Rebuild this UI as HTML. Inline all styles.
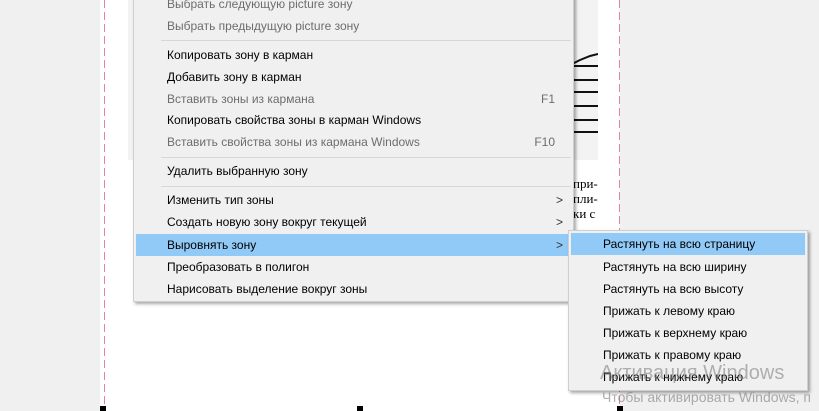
<!DOCTYPE html>
<html><head><meta charset="utf-8"><style>
body{margin:0;width:819px;height:411px;overflow:hidden;background:#f0f0f0;position:relative;font-family:"Segoe UI","Liberation Sans",sans-serif;font-size:12px;}
.page{position:absolute;left:100px;top:0;width:520px;height:411px;background:#fff;}
.dash{position:absolute;top:0;height:411px;width:1px;background:repeating-linear-gradient(to bottom,#e87fa0 0 8px,transparent 8px 12px);}
.scan{position:absolute;left:128px;top:0;width:470px;height:160px;background:#f3f3f3;}
.menu{position:absolute;background:#f0f0f0;border:1px solid #cfcfcf;box-shadow:2px 2px 3px rgba(0,0,0,.35);}
.it{position:absolute;left:0;right:0;height:22px;line-height:22px;color:#000;white-space:nowrap;}
.it.d{color:#6d6d6d;}
.it span.k{position:absolute;right:18px;}
.sep{position:absolute;left:27px;right:2px;height:1px;background:#d7d7d7;}
.hl{background:#91c9f7;}
.ar{position:absolute;right:10px;font-size:12px;color:#333;}
.mark{position:absolute;top:406px;width:6px;height:5px;background:#000;}
</style></head><body>
<div class="page"></div>
<div class="scan">
<svg width="470" height="160" style="position:absolute;left:0;top:0">
<g stroke="#111" stroke-width="2">
<line x1="440" y1="66" x2="470" y2="66"/><line x1="440" y1="80" x2="470" y2="80"/><line x1="440" y1="92" x2="470" y2="92"/><line x1="440" y1="106" x2="470" y2="106"/><line x1="440" y1="120" x2="470" y2="120"/><line x1="440" y1="132" x2="470" y2="132"/>
<path d="M440 66 L452 60 L462 56 L470 54" fill="none"/>
</g></svg>
</div>
<div style="position:absolute;left:573px;top:176px;font-family:'Liberation Serif',serif;font-size:13px;line-height:15px;color:#000">при-<br>пли-<br>ки с</div>
<div class="dash" style="left:104px"></div>
<div class="dash" style="left:619px"></div>
<div class="mark" style="left:100px"></div><div class="mark" style="left:357px"></div><div class="mark" style="left:617px"></div>

<div class="menu" style="left:133px;top:-8px;width:439px;height:308px;">
<div style="position:absolute;left:0;top:0;width:439px;height:308px">
<div class="it d" style="top:0px;padding-left:33px">Выбрать следующую picture зону</div>
<div class="it d" style="top:22px;padding-left:33px">Выбрать предыдущую picture зону</div>
<div class="sep" style="top:47px"></div>
<div class="it" style="top:51px;padding-left:33px">Копировать зону в карман</div>
<div class="it" style="top:73px;padding-left:33px">Добавить зону в карман</div>
<div class="it d" style="top:95px;padding-left:33px">Вставить зоны из кармана<span class="k">F1</span></div>
<div class="it" style="top:116px;padding-left:33px">Копировать свойства зоны в карман Windows</div>
<div class="it d" style="top:138px;padding-left:33px">Вставить свойства зоны из кармана Windows<span class="k">F10</span></div>
<div class="sep" style="top:164px"></div>
<div class="it" style="top:167px;padding-left:33px">Удалить выбранную зону</div>
<div class="sep" style="top:193px"></div>
<div class="it" style="top:196px;padding-left:33px">Изменить тип зоны<span class="ar">&gt;</span></div>
<div class="it" style="top:218px;padding-left:33px">Создать новую зону вокруг текущей<span class="ar">&gt;</span></div>
<div class="it hl" style="top:241px;left:2px;right:2px;padding-left:31px">Выровнять зону<span class="ar" style="right:8px">&gt;</span></div>
<div class="it" style="top:263px;padding-left:33px">Преобразовать в полигон</div>
<div class="it" style="top:285px;padding-left:33px">Нарисовать выделение вокруг зоны</div>
</div></div>

<div class="menu" style="left:568px;top:230px;width:238px;height:159px;">
<div class="it hl" style="top:2px;left:2px;right:2px;padding-left:32px">Растянуть на всю страницу</div>
<div class="it" style="top:25px;padding-left:34px">Растянуть на всю ширину</div>
<div class="it" style="top:47px;padding-left:34px">Растянуть на всю высоту</div>
<div class="it" style="top:69px;padding-left:34px">Прижать к левому краю</div>
<div class="it" style="top:91px;padding-left:34px">Прижать к верхнему краю</div>
<div class="it" style="top:113px;padding-left:34px">Прижать к правому краю</div>
<div class="it" style="top:135px;padding-left:34px">Прижать к нижнему краю</div>
</div>
<div style="position:absolute;left:600px;top:362px;font-size:20px;color:rgba(120,120,120,.55);white-space:nowrap">Активация Windows</div>
<div style="position:absolute;left:602px;top:389px;font-size:14px;color:rgba(120,120,120,.6);white-space:nowrap">Чтобы активировать Windows, п</div>
</body></html>
